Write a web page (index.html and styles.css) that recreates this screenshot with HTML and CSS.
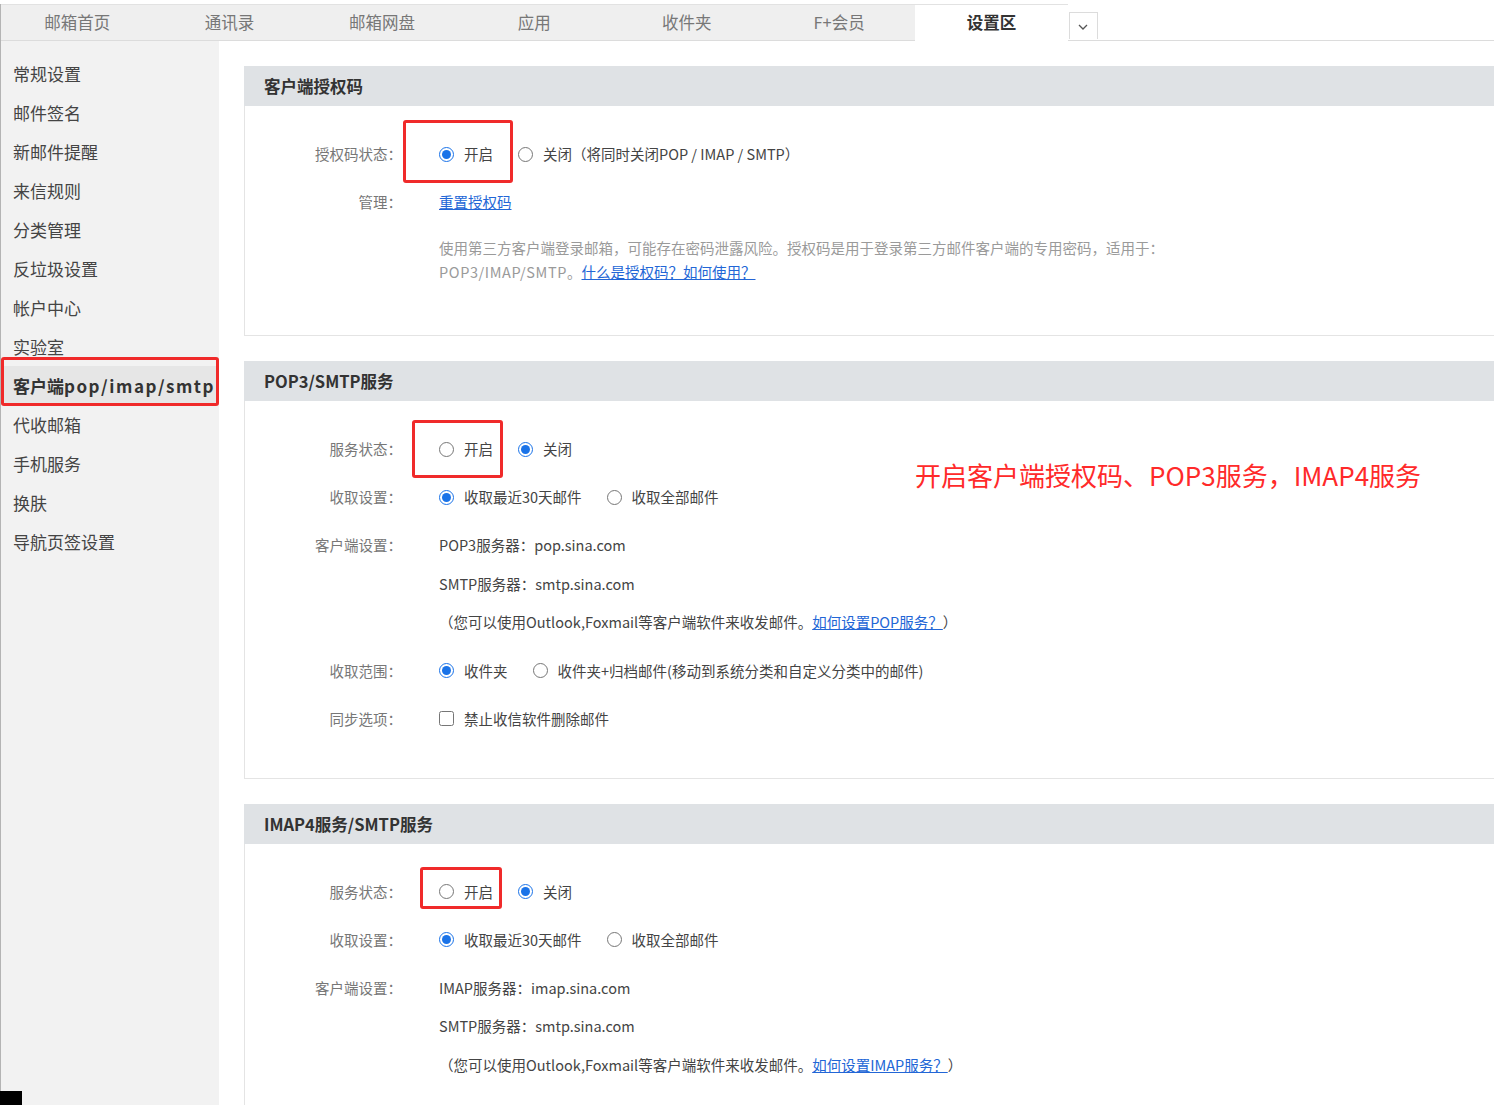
FILE: index.html
```html
<!DOCTYPE html>
<html>
<head>
    <meta charset="utf-8">
    <!-- Add style/CSS -->
    <link rel="stylesheet" href="styles.css">
</head>
<body>
<div class="page">
    <!-- Top tabs -->
    <div class="topbar">
        <div class="tab">邮箱首页</div>
        <div class="tab">通讯录</div>
        <div class="tab">邮箱网盘</div>
        <div class="tab">应用</div>
        <div class="tab">收件夹</div>
        <div class="tab">F+会员</div>
        <div class="tab active">设置区</div>
        <div class="more">
            <svg width="10" height="6" viewBox="0 0 10 6"><path d="M1 1 L5 5 L9 1" fill="none" stroke="#555" stroke-width="1.3"/></svg>
        </div>
    </div>

    <div class="main">
        <!-- Left menu -->
        <div class="sidebar">
            <div class="item">常规设置</div>
            <div class="item">邮件签名</div>
            <div class="item">新邮件提醒</div>
            <div class="item">来信规则</div>
            <div class="item">分类管理</div>
            <div class="item">反垃圾设置</div>
            <div class="item">帐户中心</div>
            <div class="item">实验室</div>
            <div class="item current">
                客户端<span class="wide">pop/imap/smtp</span>
                <span class="mark mark-side"></span>
            </div>
            <div class="item">代收邮箱</div>
            <div class="item">手机服务</div>
            <div class="item">换肤</div>
            <div class="item">导航页签设置</div>
        </div>

        <div class="content">
            <!-- Auth code -->
            <div class="section">
                <div class="sec-head">客户端授权码</div>
                <div class="sec-body sec-auth">
                    <span class="mark mark-1"></span>
                    <div class="row">
                        <div class="label">授权码状态：</div>
                        <div class="value">
                            <label class="opt"><input type="radio" name="auth" checked>开启</label>
                            <label class="opt"><input type="radio" name="auth">关闭（将同时关闭POP / IMAP / SMTP）</label>
                        </div>
                    </div>
                    <div class="row">
                        <div class="label">管理：</div>
                        <div class="value"><a href="#" class="link">重置授权码</a></div>
                    </div>
                    <div class="desc">
                        使用第三方客户端登录邮箱，可能存在密码泄露风险。授权码是用于登录第三方邮件客户端的专用密码，适用于：<br>
                        <span class="latin">POP3/IMAP/SMTP</span>。<a href="#" class="link">什么是授权码？如何使用？</a>
                    </div>
                </div>
            </div>

            <!-- POP3 -->
            <div class="section">
                <div class="sec-head">POP3/SMTP服务</div>
                <div class="sec-body sec-pop">
                    <span class="mark mark-2"></span>
                    <div class="note">开启客户端授权码、POP3服务，IMAP4服务</div>
                    <div class="row">
                        <div class="label">服务状态：</div>
                        <div class="value">
                            <label class="opt"><input type="radio" name="pop">开启</label>
                            <label class="opt"><input type="radio" name="pop" checked>关闭</label>
                        </div>
                    </div>
                    <div class="row">
                        <div class="label">收取设置：</div>
                        <div class="value">
                            <label class="opt"><input type="radio" name="popget" checked>收取最近30天邮件</label>
                            <label class="opt"><input type="radio" name="popget">收取全部邮件</label>
                        </div>
                    </div>
                    <div class="row multi">
                        <div class="label">客户端设置：</div>
                        <div class="value lines">
                            <div>POP3服务器：pop.sina.com</div>
                            <div>SMTP服务器：smtp.sina.com</div>
                            <div>（您可以使用Outlook,Foxmail等客户端软件来收发邮件。<a href="#" class="link">如何设置POP服务？</a>）</div>
                        </div>
                    </div>
                    <div class="row">
                        <div class="label">收取范围：</div>
                        <div class="value">
                            <label class="opt"><input type="radio" name="range" checked>收件夹</label>
                            <label class="opt"><input type="radio" name="range">收件夹+归档邮件(移动到系统分类和自定义分类中的邮件)</label>
                        </div>
                    </div>
                    <div class="row">
                        <div class="label">同步选项：</div>
                        <div class="value">
                            <label class="opt"><input type="checkbox">禁止收信软件删除邮件</label>
                        </div>
                    </div>
                </div>
            </div>

            <!-- IMAP4 -->
            <div class="section">
                <div class="sec-head">IMAP4服务/SMTP服务</div>
                <div class="sec-body sec-imap">
                    <span class="mark mark-3"></span>
                    <div class="row">
                        <div class="label">服务状态：</div>
                        <div class="value">
                            <label class="opt"><input type="radio" name="imap">开启</label>
                            <label class="opt"><input type="radio" name="imap" checked>关闭</label>
                        </div>
                    </div>
                    <div class="row">
                        <div class="label">收取设置：</div>
                        <div class="value">
                            <label class="opt"><input type="radio" name="imapget" checked>收取最近30天邮件</label>
                            <label class="opt"><input type="radio" name="imapget">收取全部邮件</label>
                        </div>
                    </div>
                    <div class="row multi">
                        <div class="label">客户端设置：</div>
                        <div class="value lines">
                            <div>IMAP服务器：imap.sina.com</div>
                            <div>SMTP服务器：smtp.sina.com</div>
                            <div>（您可以使用Outlook,Foxmail等客户端软件来收发邮件。<a href="#" class="link">如何设置IMAP服务？</a>）</div>
                        </div>
                    </div>
                </div>
            </div>
        </div>
    </div>
    <div class="corner"></div>
</div>
</body>
</html>
```

FILE: styles.css
```css
html, body {
    margin: 0;
    padding: 0;
    height: 100%;
    overflow: hidden;
}

body {
    background: #fff;
    font-family: "Noto Sans CJK SC", "Noto Sans", sans-serif;
    color: #444;
}

.page {
    height: 100%;
    border-left: 1px solid #b4b4b4;
    box-sizing: border-box;
    position: relative;
}

/* Top tabs */
.topbar {
    display: flex;
    margin-top: 4px;
    height: 36px;
    border-bottom: 1px solid #dcdcdc;
}

.tab {
    width: 152.4px;
    line-height: 35px;
    text-align: center;
    font-size: 16.5px;
    color: #777;
    background: #efefef;
    border-top: 1px solid #e2e2e2;
}

.tab.active {
    background: #fff;
    color: #333;
    font-weight: bold;
    height: 36px;
    margin-bottom: -1px;
}

.more {
    width: 29px;
    height: 27px;
    margin-top: 8px;
    margin-left: 1px;
    border: 1px solid #dcdcdc;
    border-bottom: none;
    display: flex;
    align-items: center;
    justify-content: center;
    padding-top: 2px;
    box-sizing: border-box;
}

/* Layout */
.main {
    display: flex;
    height: calc(100% - 41px);
}

.sidebar {
    width: 218px;
    flex-shrink: 0;
    background: #f2f2f2;
    padding-top: 12.5px;
}

.sidebar .item {
    height: 39px;
    line-height: 39px;
    padding-left: 12px;
    font-size: 17px;
    color: #444;
    white-space: nowrap;
}

.sidebar .item.current {
    position: relative;
    font-weight: bold;
    color: #333;
    background: #e6e6e6;
}

.sidebar .wide {
    letter-spacing: 1.5px;
}

.content {
    flex: 1;
    padding: 25px 0 0 25px;
    min-width: 0;
}

.section {
    margin-bottom: 25px;
}

.sec-head {
    height: 40px;
    line-height: 40px;
    padding-left: 20px;
    background: #dfe2e5;
    font-size: 16.5px;
    font-weight: bold;
    color: #333;
}

.sec-body {
    position: relative;
    border-left: 1px solid #e4e4e4;
    border-bottom: 1px solid #e4e4e4;
    padding-top: 24px;
}

.sec-auth {
    padding-bottom: 51px;
}

.sec-pop {
    padding-bottom: 35px;
}

.sec-imap {
    padding-bottom: 200px;
}

/* Rows */
.row {
    display: flex;
    padding: 12px 0;
    height: 24px;
    line-height: 24px;
    font-size: 14.5px;
    white-space: nowrap;
}

.row.multi {
    height: auto;
    padding: 5px 0;
    line-height: 38.5px;
}

.label {
    width: 157px;
    flex-shrink: 0;
    text-align: right;
    color: #777;
}

.value {
    display: flex;
    align-items: center;
    margin-left: 37px;
    color: #444;
}

.value.lines {
    display: block;
}

.opt {
    display: flex;
    align-items: center;
    margin-right: 25px;
}

.opt input {
    width: 15px;
    height: 15px;
    margin: 0 10px 0 0;
    accent-color: #1a73e8;
}

.desc {
    margin: 10px 0 0 194px;
    line-height: 24px;
    font-size: 14.5px;
    color: #9a9a9a;
    white-space: nowrap;
}

.desc .latin {
    letter-spacing: 0.6px;
}

.link {
    color: #2266d6;
    text-decoration: underline;
}

/* Red annotations */
.mark {
    position: absolute;
    border: 3px solid #f02a2a;
    border-radius: 3px;
    box-sizing: border-box;
}

.mark-side {
    left: 0;
    top: -8.5px;
    width: 218px;
    height: 49px;
}

.mark-1 {
    left: 158px;
    top: 14px;
    width: 110px;
    height: 63px;
}

.mark-2 {
    left: 167px;
    top: 19px;
    width: 91px;
    height: 58px;
}

.mark-3 {
    left: 175px;
    top: 23px;
    width: 82px;
    height: 42px;
}

.note {
    position: absolute;
    left: 670px;
    top: 59px;
    font-size: 26px;
    line-height: 30px;
    color: #ff2a2a;
    white-space: nowrap;
}

.corner {
    position: absolute;
    left: -1px;
    bottom: 0;
    width: 22px;
    height: 18px;
    background: #000;
}
```
